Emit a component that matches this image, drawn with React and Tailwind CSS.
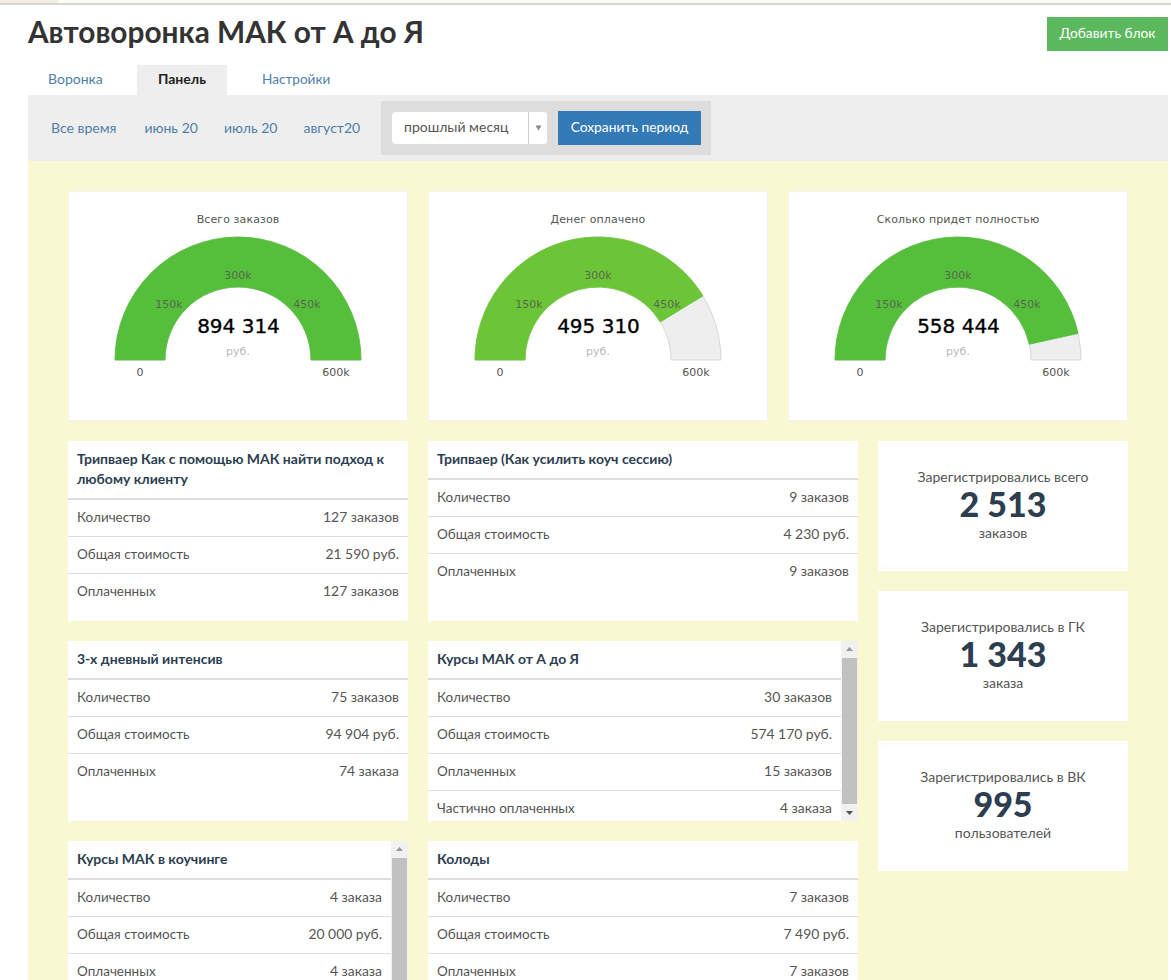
const FONT = "font-['Lato','Open_Sans','Noto_Sans',sans-serif]";

const gauges = [
  { title: "Всего заказов", value: "894 314", share: 1, color: "#55bf3b" },
  { title: "Денег оплачено", value: "495 310", share: 0.8255, color: "#6cc437" },
  { title: "Сколько придет полностью", value: "558 444", share: 0.9307, color: "#55bf3b" },
];

const pos = (r, share) => {
  const a = Math.PI * (1 - share);
  return [123 + r * Math.cos(a), 123 - r * Math.sin(a)];
};

// дуга от левого края до нужной доли
const arcPath = (from, to) => {
  const [x1, y1] = pos(123, from);
  const [x2, y2] = pos(123, to);
  const [x3, y3] = pos(73, to);
  const [x4, y4] = pos(73, from);
  return `M${x1} ${y1}A123 123 0 0 1 ${x2} ${y2}L${x3} ${y3}A73 73 0 0 0 ${x4} ${y4}Z`;
};

const GaugeCard = ({ title, value, share, color }) => (
  <div className="bg-white h-[230px] flex flex-col items-center pt-[20px] border border-[#f3f3ee] font-['DejaVu_Sans',sans-serif]">
    <div className="text-[11px] leading-[15px] text-[#555] tracking-[0.1px]">{title}</div>
    <svg width="260" height="160" viewBox="-7 -1 260 160" className="mt-[9px]">
      <path d={arcPath(0, 1)} fill="#eeeeee" stroke="#cfcfd6" strokeWidth="0.8" />
      <path d={arcPath(0, share)} fill={color} stroke={color} strokeWidth="0.8" />
      <g fontSize="11" fill="#555" fillOpacity="0.85" textAnchor="middle">
        <text x="123" y="42">300k</text>
        <text x="54" y="71">150k</text>
        <text x="192" y="71">450k</text>
      </g>
      <g fontSize="11" fill="#555" textAnchor="middle">
        <text x="25" y="139">0</text>
        <text x="221" y="139">600k</text>
      </g>
      <text x="123.5" y="96" fontSize="20" fill="#000" stroke="#000" strokeWidth="0.35" textAnchor="middle">{value}</text>
      <text x="123" y="118" fontSize="11" fill="#b8b8b8" textAnchor="middle">руб.</text>
    </svg>
  </div>
);

const Arrow = ({ up }) => (
  <svg width="17" height="17" viewBox="0 0 17 17" className="shrink-0">
    <path d={up ? "M8.5 6L12 10H5Z" : "M8.5 11L5 7H12Z"} fill="#505050" fillOpacity={up ? 0.55 : 1} />
  </svg>
);

const Row = ({ label, value }) => (
  <div className="h-[37px] shrink-0 flex items-center justify-between px-[9px] pb-[2px] border-b border-[#ddd] last:border-b-0 text-[13.5px] text-[#555]">
    <span>{label}</span>
    <span className="text-[13.9px]">{value}</span>
  </div>
);

const TableCard = ({ title, rows, scroll }) => (
  <div className="bg-white h-[180px] flex overflow-hidden">
    <div className="flex-1 min-w-0 overflow-hidden">
      <div className="px-[9px] pt-[8px] pb-[9px] border-b-2 border-[#ddd] text-[14px] leading-[20px] font-bold text-[#2c3e50]">
        {title}
      </div>
      {rows.map(([label, value]) => (
        <Row key={label} label={label} value={value} />
      ))}
    </div>
    {scroll && (
      <div className="w-[17px] shrink-0 bg-[#f1f1f1] flex flex-col">
        <Arrow up />
        <div className="flex-1 bg-[#c1c1c1] mx-px" />
        <Arrow />
      </div>
    )}
  </div>
);

const StatCard = ({ title, value, unit }) => (
  <div className="bg-white h-[130px] flex flex-col items-center pt-[26px] text-[#555]">
    <div className="text-[14px] leading-[20px]">{title}</div>
    <div className="text-[34px] leading-[36px] font-black text-[#2c3e50] mt-[-1px]">{value}</div>
    <div className="text-[14px] leading-[20px] mt-[1px]">{unit}</div>
  </div>
);

const rowsOf = (count, total, paid) => [
  ["Количество", count],
  ["Общая стоимость", total],
  ["Оплаченных", paid],
];

export default function App() {
  return (
    <div className={`h-screen overflow-hidden bg-white ${FONT}`}>
      <div className="h-[5px] bg-[#fafaf6] border-b-2 border-[#d8d6d0]">
        <div className="w-[58px] h-[3px] bg-[#f2efe2]" />
      </div>

      <div className="pl-[28px] pr-[3px]">
        <div className="flex items-start justify-between h-[60px]">
          <h1 className="text-[29.8px] leading-[36px] font-bold text-[#333] mt-[9px]">Автоворонка МАК от А до Я</h1>
          <button className="mt-[12px] w-[121px] h-[34px] pb-[2px] bg-[#5cb85c] text-white text-[13.8px]">Добавить блок</button>
        </div>

        <div className="flex h-[30px] text-[14px] text-[#4f7ea8]">
          <a className="w-[109px] pl-[20px] leading-[28px]">Воронка</a>
          <a className="w-[90px] text-center bg-[#eee] font-bold text-[#222] leading-[28px]">Панель</a>
          <a className="pl-[35px] leading-[28px] text-[13.6px]">Настройки</a>
        </div>

        <div className="h-[66px] bg-[#eee] flex items-center text-[14px] text-[#4f7ea8]">
          <div className="flex gap-[26px] pl-[23px] pb-[2px] w-[353px]">
            <a className="mr-[2px]">Все время</a>
            <a>июнь 20</a>
            <a>июль 20</a>
            <a>август20</a>
          </div>
          <div className="h-[54px] w-[330px] bg-[#ddd] flex items-center gap-[10px] px-[10px]">
            <div className="w-[157px] h-[34px] bg-white rounded-[4px] border border-[#ddd] flex text-[#555]">
              <span className="flex-1 pl-[12px] leading-[30px]">прошлый месяц</span>
              <span className="w-[19px] border-l border-[#ccc] flex items-center justify-center">
                <svg width="7" height="6" viewBox="0 0 7 6">
                  <path d="M0.5 0.5H6.5L3.5 5.5Z" fill="#888" />
                </svg>
              </span>
            </div>
            <button className="w-[143px] h-[34px] pb-[2px] bg-[#337ab7] text-white text-[13.8px]">Сохранить период</button>
          </div>
        </div>

        <div className="bg-[#f8f8d2] px-[40px] pt-[30px] h-[900px]">
          <div className="grid grid-cols-3 gap-[20px]">
            {gauges.map((g) => (
              <GaugeCard key={g.title} {...g} />
            ))}
          </div>

          <div className="flex gap-[20px] mt-[20px]">
            <div className="w-[790px] grid grid-cols-[340px_430px] gap-[20px]">
              <TableCard
                title="Трипваер Как с помощью МАК найти подход к любому клиенту"
                rows={rowsOf("127 заказов", "21 590 руб.", "127 заказов")}
              />
              <TableCard
                title="Трипваер (Как усилить коуч сессию)"
                rows={rowsOf("9 заказов", "4 230 руб.", "9 заказов")}
              />
              <TableCard
                title="3-х дневный интенсив"
                rows={rowsOf("75 заказов", "94 904 руб.", "74 заказа")}
              />
              <TableCard
                scroll
                title="Курсы МАК от А до Я"
                rows={[
                  ...rowsOf("30 заказов", "574 170 руб.", "15 заказов"),
                  ["Частично оплаченных", "4 заказа"],
                ]}
              />
              <TableCard
                scroll
                title="Курсы МАК в коучинге"
                rows={rowsOf("4 заказа", "20 000 руб.", "4 заказа")}
              />
              <TableCard
                title="Колоды"
                rows={rowsOf("7 заказов", "7 490 руб.", "7 заказов")}
              />
            </div>
            <div className="w-[250px] flex flex-col gap-[20px]">
              <StatCard title="Зарегистрировались всего" value="2 513" unit="заказов" />
              <StatCard title="Зарегистрировались в ГК" value="1 343" unit="заказа" />
              <StatCard title="Зарегистрировались в ВК" value="995" unit="пользователей" />
            </div>
          </div>
        </div>
      </div>
    </div>
  );
}
